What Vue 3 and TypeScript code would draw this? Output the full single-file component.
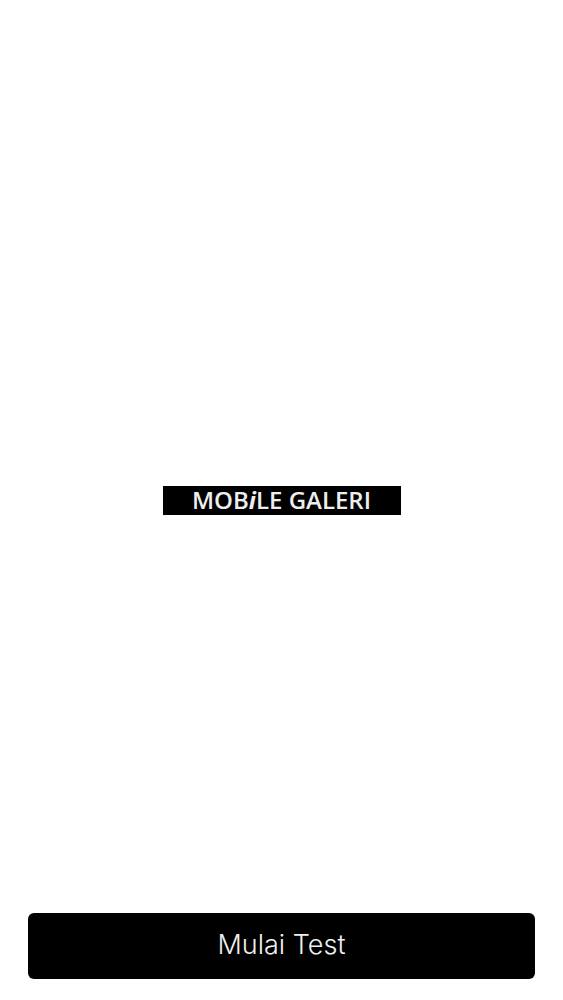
<script setup lang="ts">
const brandStart: string = "MOB";
const brandEnd: string = "LE GALERI";
const action: string = "Mulai Test";
</script>

<template>
  <div class="page">
    <main class="center">
      <div class="logo">
        <span class="brand">{{ brandStart }}<i class="dotted">i</i>{{ brandEnd }}</span>
      </div>
    </main>
    <button class="start" type="button">{{ action }}</button>
  </div>
</template>

<style>
html, body { margin: 0; background: #ffffff; }
</style>

<style scoped>
.page {
  height: 1000px;
  box-sizing: border-box;
  display: flex;
  flex-direction: column;
  padding: 0 28px 21px;
  background: #ffffff;
}
.center {
  flex: 1;
  padding-top: 87px;
  display: flex;
  align-items: center;
  justify-content: center;
}
.logo {
  width: 238px;
  height: 29px;
  box-sizing: border-box;
  padding-bottom: 1px;
  background: #000000;
  display: flex;
  align-items: center;
  justify-content: center;
}
.brand {
  font-family: "Open Sans", "Liberation Sans", sans-serif;
  font-weight: 600;
  font-size: 24px;
  line-height: 28px;
  color: #eeeeee;
  white-space: nowrap;
}
.dotted {
  font-weight: 700;
}
.start {
  height: 66px;
  width: 100%;
  flex: none;
  border: 0;
  border-radius: 6px;
  background: #000000;
  color: #f0f0f0;
  font-family: Inter, "Noto Sans", sans-serif;
  font-weight: 300;
  font-size: 27px;
  line-height: 64px;
  padding: 0 0 2px;
}
</style>
